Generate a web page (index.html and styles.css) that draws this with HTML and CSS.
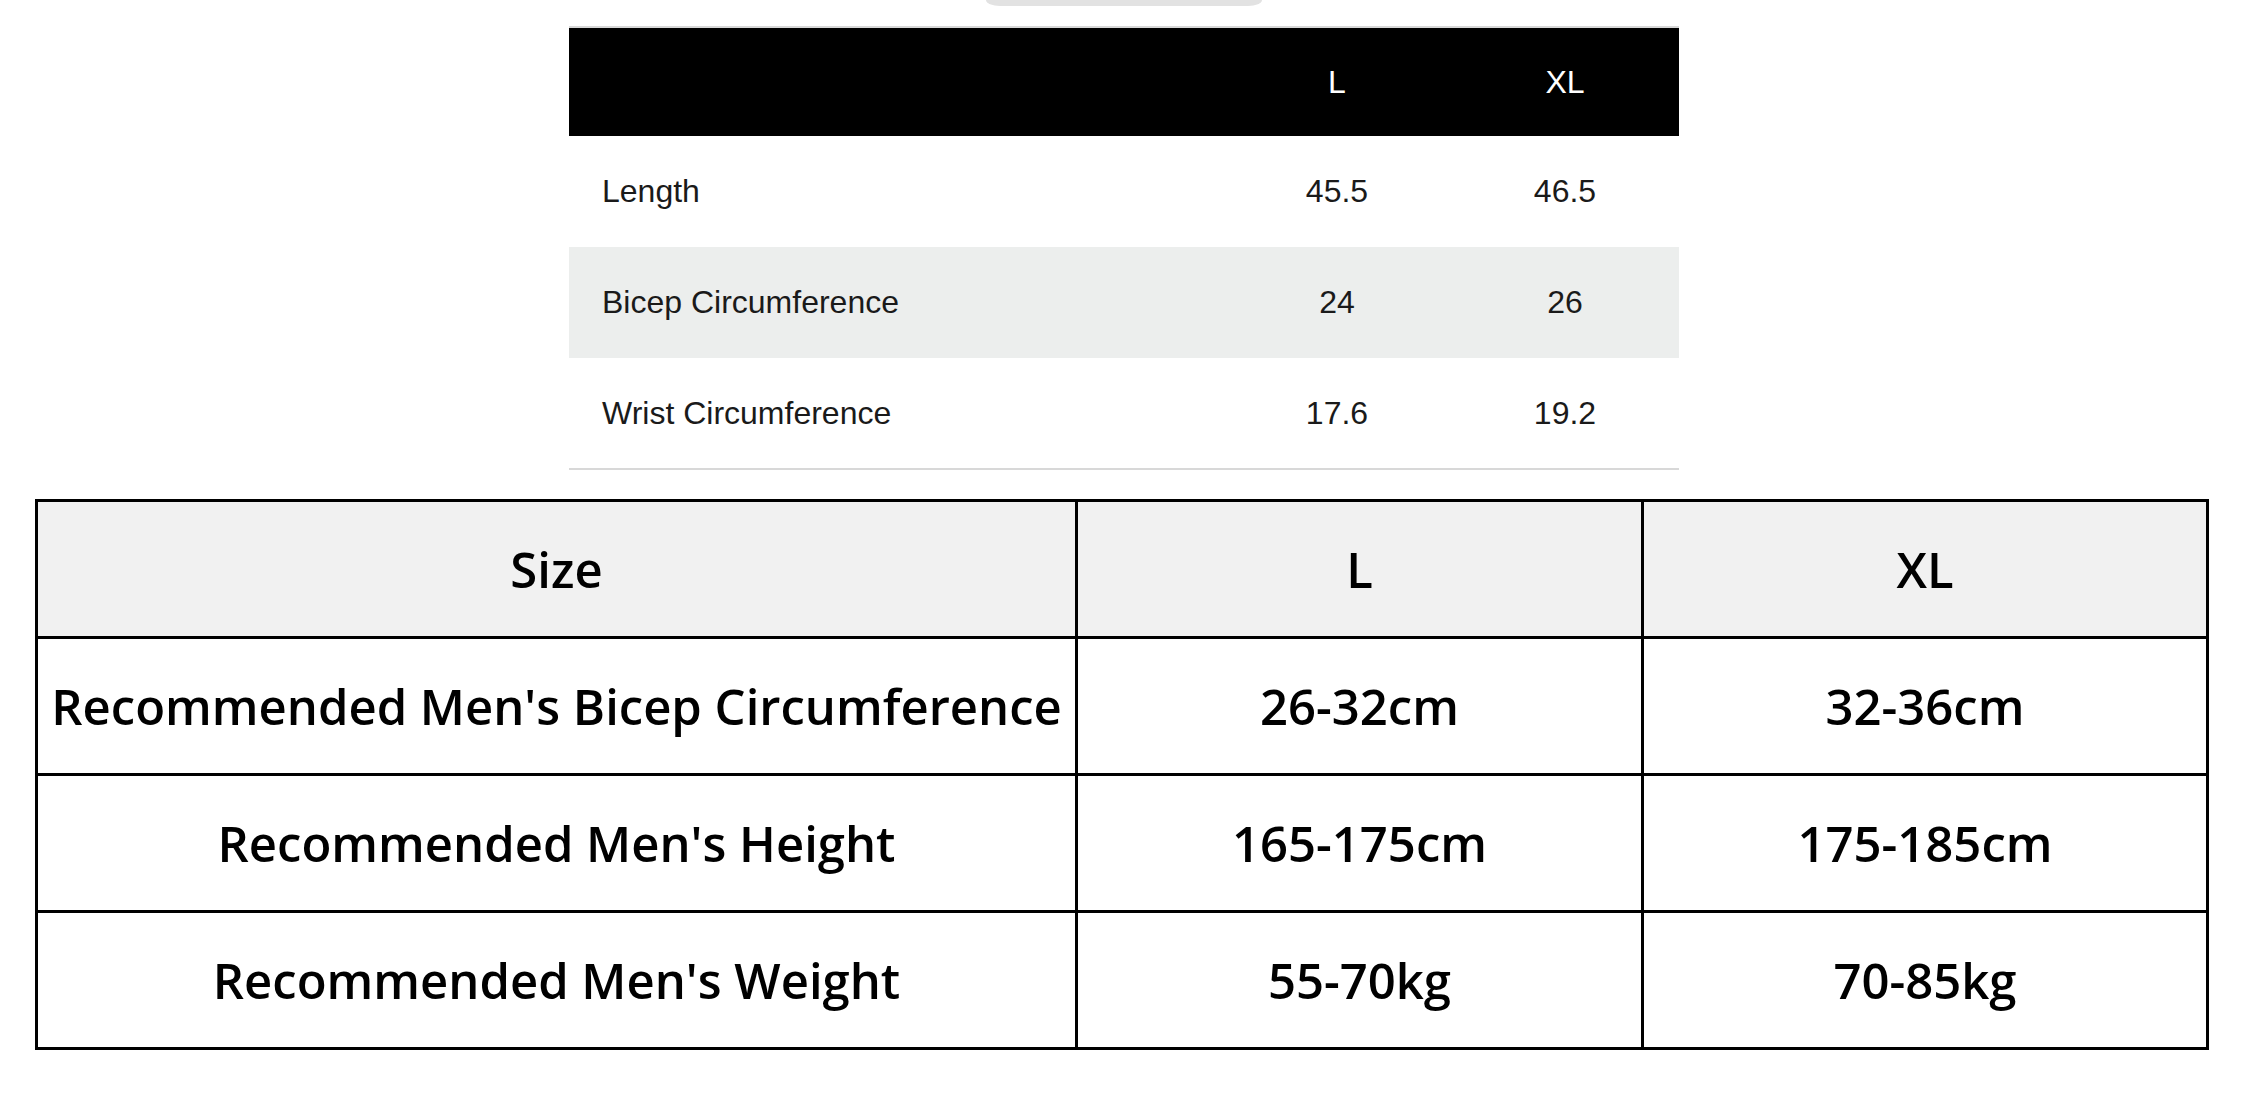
FILE: index.html
```html
<!DOCTYPE html>
<html>
<head>
<meta charset="utf-8">
<link rel="stylesheet" href="styles.css">
</head>
<body>
<div class="top">
  <div class="pill"></div>
  <table class="spec">
    <colgroup><col><col class="num"><col class="num"></colgroup>
    <thead>
      <tr><th class="lbl"></th><th>L</th><th>XL</th></tr>
    </thead>
    <tbody>
      <tr><td class="lbl">Length</td><td>45.5</td><td>46.5</td></tr>
      <tr class="alt"><td class="lbl">Bicep Circumference</td><td>24</td><td>26</td></tr>
      <tr><td class="lbl">Wrist Circumference</td><td>17.6</td><td>19.2</td></tr>
    </tbody>
  </table>
</div>
<table class="size">
  <colgroup><col class="w1"><col class="w2"><col class="w3"></colgroup>
  <tr class="head"><td>Size</td><td>L</td><td>XL</td></tr>
  <tr><td>Recommended Men's Bicep Circumference</td><td>26-32cm</td><td>32-36cm</td></tr>
  <tr><td>Recommended Men's Height</td><td>165-175cm</td><td>175-185cm</td></tr>
  <tr><td>Recommended Men's Weight</td><td>55-70kg</td><td>70-85kg</td></tr>
</table>
</body>
</html>
```
FILE: styles.css
```css
html, body {
  margin: 0;
  padding: 0;
  background: #ffffff;
}
body {
  width: 2252px;
  height: 1110px;
  overflow: hidden;
}
.top {
  width: 1110px;
  margin-left: 569px;
}
.pill {
  width: 276px;
  height: 6px;
  margin: 0 auto 20px;
  background: #e2e2e2;
  border-radius: 0 0 14px 14px / 0 0 6px 6px;
}
.spec {
  width: 1110px;
  table-layout: fixed;
  border-collapse: collapse;
  border-top: 2px solid #d8d8d8;
  border-bottom: 2px solid #d8d8d8;
  font-family: "Liberation Sans", Arial, sans-serif;
  font-size: 32px;
  color: #1a1a1a;
}
.spec col.num {
  width: 228px;
}
.spec th, .spec td {
  padding: 0;
  text-align: center;
  font-weight: normal;
}
.spec th.lbl, .spec td.lbl {
  text-align: left;
  padding-left: 33px;
}
.spec thead tr {
  background: #000000;
  color: #ffffff;
  height: 109px;
}
.spec tbody tr {
  height: 111px;
}
.spec tr.alt {
  background: #eceeed;
}
.size {
  margin: 29px 0 0 35px;
  width: 2174px;
  table-layout: fixed;
  border-collapse: collapse;
  border: 3px solid #000;
  font-family: "Open Sans", "Noto Sans", sans-serif;
  font-weight: 600;
  font-size: 49px;
  color: #000;
}
.size col.w1 {
  width: 1040px;
}
.size col.w2 {
  width: 566px;
}
.size td {
  border: 3px solid #000;
  text-align: center;
  height: 134px;
  padding: 0;
  white-space: nowrap;
}
.size tr.head td {
  background: #f1f1f1;
}
```
